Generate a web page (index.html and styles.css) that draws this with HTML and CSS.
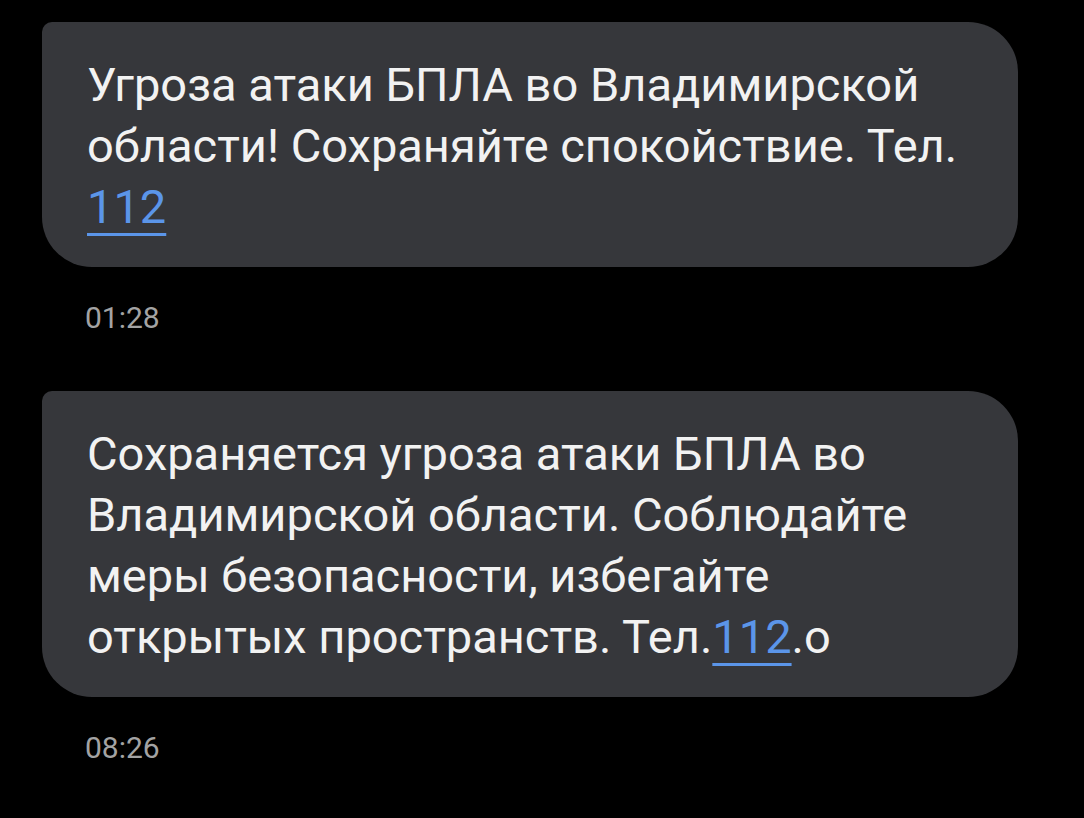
FILE: index.html
```html
<!DOCTYPE html>
<html lang="ru">
<head>
<meta charset="utf-8">
<link rel="stylesheet" href="styles.css">
</head>
<body>
<div class="thread">
  <div class="msg">
    <div class="bubble">Угроза атаки БПЛА во Владимирской<br>области! Сохраняйте спокойствие. Тел.<br><a class="link">112</a></div>
    <div class="time">01:28</div>
  </div>
  <div class="msg">
    <div class="bubble">Сохраняется угроза атаки БПЛА во<br>Владимирской области. Соблюдайте<br>меры безопасности, избегайте<br>открытых пространств. Тел.<a class="link">112</a>.о</div>
    <div class="time">08:26</div>
  </div>
</div>
</body>
</html>
```
FILE: styles.css
```css
html, body {
  margin: 0;
  padding: 0;
  background: #000;
}
.thread {
  display: flex;
  flex-direction: column;
  padding: 22px 66px 0 42px;
}
.msg {
  display: flex;
  flex-direction: column;
}
.msg + .msg {
  margin-top: 55px;
}
.bubble {
  background: #36373b;
  border-radius: 10px 50px 50px 50px;
  padding: 32px 40px 30px 45px;
  color: #f2f2f2;
  font-family: Roboto, "Noto Sans", sans-serif;
  font-size: 47px;
  letter-spacing: 0;
  line-height: 61px;
  font-weight: 400;
}
.link {
  color: #5b95e9;
  text-decoration: underline;
  text-decoration-thickness: 3px;
  text-underline-offset: 10px;
}
.time {
  margin-top: 33px;
  padding-left: 43px;
  color: #a3a3a3;
  font-family: Roboto, "Noto Sans", sans-serif;
  font-size: 30px;
  line-height: 36px;
}
```
